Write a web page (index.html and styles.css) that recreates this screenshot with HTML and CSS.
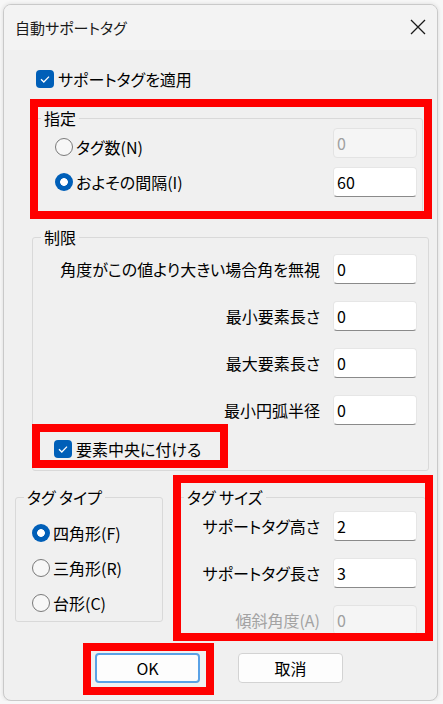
FILE: index.html
```html
<!DOCTYPE html>
<html lang="ja">
<head>
    <meta charset="UTF-8">
    <meta name="viewport" content="width=device-width, initial-scale=1.0">
    <title>自動サポートタグ</title>
    <link rel="stylesheet" href="styles.css">
</head>
<body>
    <div class="dialog">
        <div class="titlebar">
            <span class="title">自動サポートタグ</span>
            <svg class="close" width="16" height="16" viewBox="0 0 16 16">
                <path d="M1 1 L15 15 M15 1 L1 15" stroke="#1a1a1a" stroke-width="1.3" fill="none"/>
            </svg>
        </div>

        <div class="content">
            <label class="check apply">
                <span class="box"><svg width="18" height="18" viewBox="0 0 18 18"><path d="M5 9.3 L7.8 12 L13 6.6" stroke="#fff" stroke-width="1.3" fill="none"/></svg></span>
                サポートタグを適用
            </label>

            <fieldset class="group spec">
                <legend>指定</legend>
                <div class="row">
                    <label class="radio low"><span class="dot"></span>タグ数(N)</label>
                    <input class="field" type="text" value="0" disabled>
                </div>
                <div class="row">
                    <label class="radio"><span class="dot on"></span>およその間隔(I)</label>
                    <input class="field" type="text" value="60">
                </div>
            </fieldset>

            <fieldset class="group limit">
                <legend>制限</legend>
                <div class="grid">
                    <label>角度がこの値より大きい場合角を無視</label>
                    <input class="field" type="text" value="0">
                    <label>最小要素長さ</label>
                    <input class="field" type="text" value="0">
                    <label>最大要素長さ</label>
                    <input class="field" type="text" value="0">
                    <label>最小円弧半径</label>
                    <input class="field" type="text" value="0">
                </div>
                <label class="check center">
                    <span class="box"><svg width="18" height="18" viewBox="0 0 18 18"><path d="M5 9.3 L7.8 12 L13 6.6" stroke="#fff" stroke-width="1.3" fill="none"/></svg></span>
                    要素中央に付ける
                </label>
            </fieldset>

            <div class="bottom">
                <fieldset class="group type">
                    <legend>タグ タイプ</legend>
                    <label class="radio"><span class="dot on"></span>四角形(F)</label>
                    <label class="radio"><span class="dot"></span>三角形(R)</label>
                    <label class="radio"><span class="dot"></span>台形(C)</label>
                </fieldset>

                <fieldset class="group size">
                    <legend>タグ サイズ</legend>
                    <div class="grid">
                        <label>サポートタグ高さ</label>
                        <input class="field" type="text" value="2">
                        <label>サポートタグ長さ</label>
                        <input class="field" type="text" value="3">
                        <label class="off">傾斜角度(A)</label>
                        <input class="field" type="text" value="0" disabled>
                    </div>
                </fieldset>
            </div>

            <div class="buttons">
                <button class="btn ok" type="button">OK</button>
                <button class="btn" type="button">取消</button>
            </div>
        </div>

        <!-- 赤枠 (注釈) -->
        <div class="mark mark-spec"></div>
        <div class="mark mark-center"></div>
        <div class="mark mark-size"></div>
        <div class="mark mark-ok"></div>
    </div>
</body>
</html>
```

FILE: styles.css
```css
* {
    box-sizing: border-box;
}
body {
    margin: 0;
    padding: 4px 0 0 3px;
    background-color: #f7f7f7;
    font-family: "Noto Sans CJK JP", "Noto Sans", sans-serif;
    font-size: 16px;
    line-height: 20px;
    color: #000;
    font-feature-settings: "palt";
}
.dialog {
    position: relative;
    width: 435px;
    height: 697px;
    background-color: #f0f0f0;
    border: 1px solid #c9c9c9;
    border-radius: 8px;
    box-shadow: 0 0 4px rgba(0, 0, 0, 0.12);
    overflow: hidden;
}
.titlebar {
    display: flex;
    align-items: center;
    justify-content: space-between;
    height: 45px;
    padding: 0 11px 0 11px;
    background-color: #f3f3f3;
}
.title {
    font-size: 15px;
    color: #1a1a1a;
}
.close {
    margin-top: -2px;
}

.content {
    display: flex;
    flex-direction: column;
    align-items: flex-start;
}

/* チェックボックス */
.check {
    display: flex;
    align-items: center;
    gap: 4px;
    height: 20px;
}
.box {
    display: block;
    width: 18px;
    height: 18px;
    background-color: #005fb8;
    border-radius: 4px;
}
.box svg {
    display: block;
}
.apply {
    margin: 19px 0 0 32px;
}
.center {
    margin: 14px 0 0 21px;
}

/* ラジオボタン */
.radio {
    display: flex;
    align-items: center;
    gap: 3px;
    height: 20px;
}
.dot {
    width: 18px;
    height: 18px;
    border: 1px solid #7a7a7a;
    border-radius: 50%;
    background-color: #f7f7f7;
}
.dot.on {
    border: none;
    background: radial-gradient(circle, #fff 0 3.5px, #005fb8 4.2px);
}

/* グループボックス */
.group {
    margin: 0;
    padding: 0;
    border: 1px solid #d9d9d9;
    border-radius: 3px;
}
.group legend {
    margin-left: 8px;
    padding: 0 3px;
    line-height: 20px;
}
.spec {
    width: 390px;
    margin: 19px 0 0 29px;
    padding: 0 5px 15px 21px;
}
.spec legend {
    margin-left: -14px;
}
.row {
    display: flex;
    justify-content: space-between;
    align-items: center;
}
.row + .row {
    margin-top: 9px;
}
.radio.low {
    margin-top: 8px;
}
.limit {
    width: 397px;
    margin: 14px 0 0 28px;
    padding: 7px 11px 11px 0;
}
.grid {
    display: grid;
    grid-template-columns: 1fr 84px;
    column-gap: 13px;
    row-gap: 17px;
    align-items: center;
    text-align: right;
}
.bottom {
    display: flex;
    align-items: flex-start;
    gap: 12px;
    margin: 16px 0 0 11px;
}
.type {
    width: 148px;
    padding: 16px 0 8px 16px;
    display: flex;
    flex-direction: column;
    gap: 15px;
}
.type legend {
    margin-left: -8px;
}
.size {
    width: 251px;
    padding: 4px 8px 4px 0;
}
.off {
    color: #a3a3a3;
}

/* テキストボックス */
.field {
    width: 84px;
    height: 30px;
    margin: 0;
    padding: 0 3px;
    font-family: inherit;
    font-size: 16px;
    color: #000;
    background-color: #fff;
    border: 1px solid #e6e6e6;
    border-bottom: 1px solid #8a8a8a;
    border-radius: 4px;
    outline: none;
}
.field:disabled {
    background-color: #f5f5f5;
    border-color: #e3e3e3;
    color: #a0a0a0;
}

/* ボタン */
.buttons {
    display: flex;
    gap: 38px;
    margin: 13px 0 0 91px;
}
.btn {
    width: 105px;
    height: 30px;
    font-family: inherit;
    font-size: 16px;
    color: #000;
    background-color: #fdfdfd;
    border: 1px solid #d3d3d3;
    border-radius: 4px;
}
.btn.ok {
    border: 2px solid #5aa2e6;
}

/* 注釈の赤枠 */
.mark {
    position: absolute;
    border: 8px solid #ff0000;
    pointer-events: none;
}
.mark-spec {
    left: 26px;
    top: 94px;
    width: 402px;
    height: 120px;
}
.mark-center {
    left: 28px;
    top: 419px;
    width: 196px;
    height: 44px;
}
.mark-size {
    left: 169px;
    top: 470px;
    width: 260px;
    height: 166px;
}
.mark-ok {
    left: 79px;
    top: 638px;
    width: 131px;
    height: 52px;
}
```
